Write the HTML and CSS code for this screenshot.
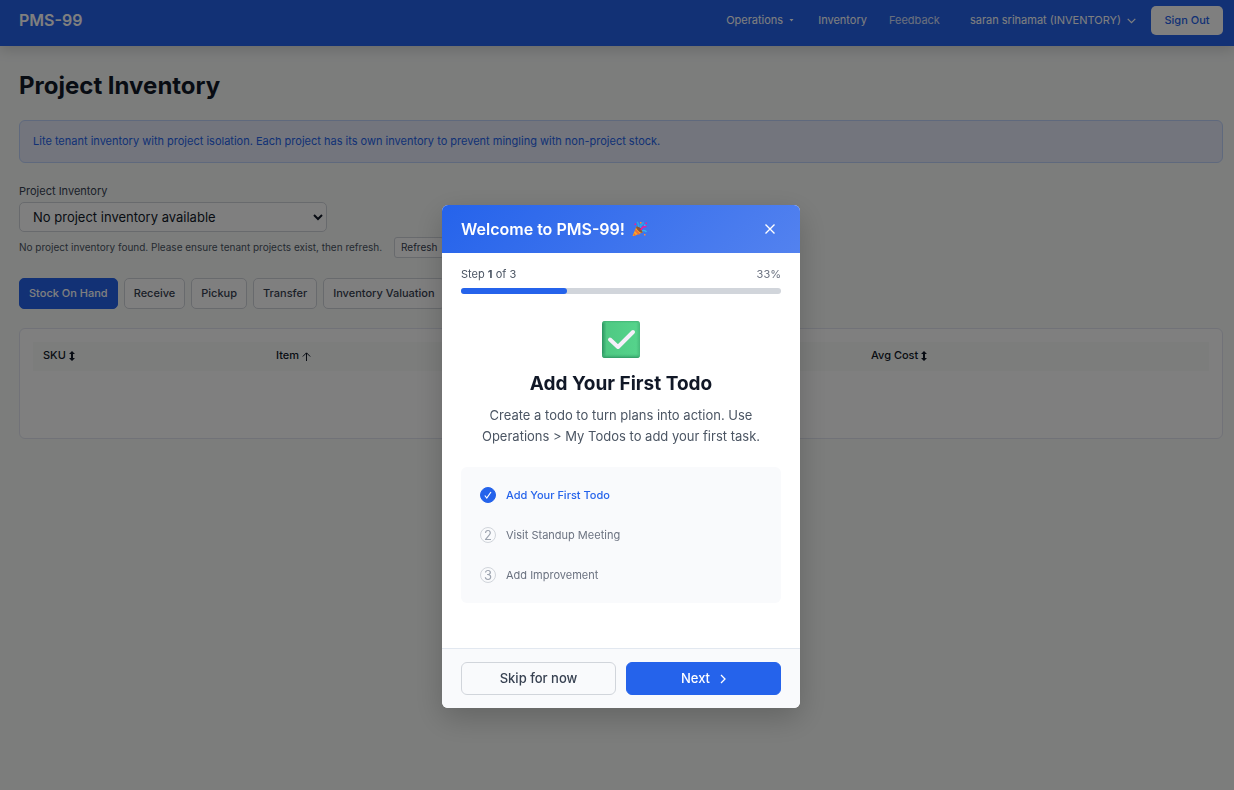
FILE: index.html
```
<!DOCTYPE html>
<html lang="en">

<head>
  <meta charset="UTF-8">
  <meta name="viewport" content="width=device-width, initial-scale=1.0">
  <title>PMS-99 - Project Inventory</title>
  <link rel="stylesheet" href="styles.css">
</head>

<body>
  <header class="navbar">
    <a class="brand" href="#">PMS-99</a>
    <nav class="nav-links">
      <button class="nav-link operations" type="button">Operations
        <svg width="5" height="3" viewBox="0 0 5 3"><path d="M.5 0h4L2.500 2.500z" fill="currentColor"/></svg>
      </button>
      <a class="nav-link" href="#">Inventory</a>
      <a class="nav-link muted" href="#">Feedback</a>
      <button class="nav-link user" type="button">saran srihamat (INVENTORY)
        <svg width="9" height="6" viewBox="0 0 9 6" fill="none" stroke="currentColor" stroke-width="1.200"><path d="M.7 .8l3.800 3.900L8.300 .8"/></svg>
      </button>
      <button class="sign-out" type="button">Sign Out</button>
    </nav>
  </header>

  <main class="page">
    <h1>Project Inventory</h1>
    <div class="notice">Lite tenant inventory with project isolation. Each project has its own inventory to prevent mingling with non-project stock.</div>

    <div class="field">
      <label for="project">Project Inventory</label>
      <select id="project">
        <option>No project inventory available</option>
      </select>
      <div class="hint">
        <span>No project inventory found. Please ensure tenant projects exist, then refresh.</span>
        <button class="btn btn-sm" type="button">Refresh</button>
      </div>
    </div>

    <div class="tabs">
      <button class="btn active" type="button">Stock On Hand</button>
      <button class="btn" type="button">Receive</button>
      <button class="btn" type="button">Pickup</button>
      <button class="btn" type="button">Transfer</button>
      <button class="btn" type="button">Inventory Valuation</button>
    </div>

    <section class="card">
      <table>
        <colgroup>
          <col class="col-sku">
          <col class="col-item">
          <col>
        </colgroup>
        <thead>
          <tr>
            <th>SKU <svg width="6" height="10" viewBox="0 0 6 10"><path d="M3 0l3 3H4v4h2L3 10 0 7h2V3H0z" fill="currentColor"/></svg></th>
            <th>Item <svg width="9" height="9" viewBox="0 0 9 9" fill="none" stroke="currentColor"><path d="M4.500 9V1M.8 4.500L4.500 .8l3.700 3.700"/></svg></th>
            <th>Avg Cost <svg width="6" height="10" viewBox="0 0 6 10"><path d="M3 0l3 3H4v4h2L3 10 0 7h2V3H0z" fill="currentColor"/></svg></th>
          </tr>
        </thead>
      </table>
    </section>
  </main>

  <div class="overlay">
    <div class="modal" role="dialog" aria-modal="true" aria-labelledby="welcome-title">
      <div class="modal-header">
        <h2 id="welcome-title">Welcome to PMS-99!</h2>
        <svg class="party" width="16" height="16" viewBox="0 0 16 16">
          <path d="M4.500 5.500l6 6L1.500 15Q.4 15.400.8 14.200z" fill="#f9a825"/>
          <path d="M3.600 8l4.600 5-2 .8L2.800 10zM2.100 12l2 2.500-1.800.6L1.300 14z" fill="#ef6c3a"/>
          <ellipse cx="7.500" cy="8.500" rx="1.800" ry="4.200" transform="rotate(-45 7.500 8.500)" fill="#8d5438"/>
          <path d="M5 1q2 1.500 1.500 5M8.500 7q-.5-3 2-4 1-1 .3-2" fill="none" stroke="#29a9e8" stroke-width="1.500"/>
          <path d="M9 9q1-4 5.500-3.500" fill="none" stroke="#f5189b" stroke-width="1.500"/>
          <path d="M10 10q2.500-1.500 4.500 1" fill="none" stroke="#35b4f0" stroke-width="1.500"/>
          <path d="M2.500 2.500h1.500V4H2.500zM13.500 1.500H15V3h-1.500z" fill="#f5189b"/>
          <path d="M8 1h1.500v1.500H8zM12 13h1.500v1.500H12z" fill="#ff8a3c"/>
          <path d="M12 3.500h1.500V5H12z" fill="#35b4f0"/>
        </svg>
        <button class="close" type="button" aria-label="Close">
          <svg width="10" height="10" viewBox="0 0 10 10" stroke="currentColor" stroke-width="1.400"><path d="M.5 .5l9 9M9.500 .5l-9 9"/></svg>
        </button>
      </div>

      <div class="modal-body">
        <div class="progress-label">
          <span>Step <b>1</b> of 3</span>
          <span class="percent">33%</span>
        </div>
        <div class="progress"><div class="progress-fill" style="width: 33%"></div></div>

        <svg class="step-icon" width="38" height="38" viewBox="0 0 38 38">
          <defs>
            <linearGradient id="edge" x1="0" x2="1">
              <stop offset="0" stop-color="#2c9462"/>
              <stop offset=".12" stop-color="#4fc983"/>
              <stop offset=".9" stop-color="#55d38b"/>
              <stop offset="1" stop-color="#47b97b"/>
            </linearGradient>
            <linearGradient id="base" x1="0" x2="0" y1="0" y2="1">
              <stop offset="0" stop-color="#3dad70" stop-opacity=".8"/>
              <stop offset=".08" stop-color="#55d38b" stop-opacity="0"/>
              <stop offset=".86" stop-color="#55d38b" stop-opacity="0"/>
              <stop offset="1" stop-color="#2f9863"/>
            </linearGradient>
          </defs>
          <rect width="38" height="37" rx="3" fill="url(#edge)"/>
          <rect width="38" height="37" rx="3" fill="url(#base)"/>
          <path d="M8 18.500l8 7.500L31 11" fill="none" stroke="#f6effa" stroke-width="4" stroke-linecap="round" stroke-linejoin="round"/>
        </svg>
        <h3>Add Your First Todo</h3>
        <p>Create a todo to turn plans into action. Use Operations &gt; My Todos to add your first task.</p>

        <ol class="steps">
          <li class="current">
            <span class="dot"><svg width="8" height="8" viewBox="0 0 8 8" fill="none" stroke="currentColor" stroke-width="1.200"><path d="M.8 4.500l2 2.500L7 1"/></svg></span>
            Add Your First Todo
          </li>
          <li><span class="dot">2</span>Visit Standup Meeting</li>
          <li><span class="dot">3</span>Add Improvement</li>
        </ol>
      </div>

      <div class="modal-footer">
        <button class="skip" type="button">Skip for now</button>
        <button class="next" type="button">Next
          <svg width="6" height="10" viewBox="0 0 6 10" fill="none" stroke="currentColor" stroke-width="1.300"><path d="M1 1l4 4-4 4"/></svg>
        </button>
      </div>
    </div>
  </div>
</body>

</html>
```
FILE: styles.css
```
* {
  box-sizing: border-box;
}

body {
  margin: 0;
  min-height: 100vh;
  background: #f8faf9;
  color: #111827;
  font-family: Inter, "Liberation Sans", sans-serif;
  font-size: 11px;
  line-height: 15px;
}

button,
select {
  font: inherit;
  color: inherit;
}

button {
  cursor: pointer;
}

h1,
h2,
h3,
p {
  margin: 0;
}

/* Top bar */
.navbar {
  display: flex;
  align-items: center;
  justify-content: space-between;
  height: 46px;
  padding: 6px 11px 11px 19px;
  background: #2563eb;
  color: #fff;
  box-shadow: 0 4px 12px rgba(0, 0, 0, 0.15);
}

.brand {
  color: inherit;
  font-size: 16px;
  font-weight: 600;
  text-decoration: none;
}

.nav-links {
  display: flex;
  align-items: center;
}

.nav-link {
  display: flex;
  align-items: center;
  gap: 6px;
  margin-right: 22px;
  padding: 0;
  border: 0;
  background: none;
  color: #fff;
  text-decoration: none;
}

.nav-link.operations {
  margin-right: 24px;
}

.nav-link.muted {
  margin-right: 30px;
  opacity: 0.8;
}

.nav-link.user {
  margin-right: 15px;
}

.sign-out {
  width: 72px;
  height: 29px;
  padding: 0;
  border: 0;
  border-radius: 5px;
  background: #fff;
  color: #2563eb;
  font-weight: 500;
}

/* Page */
.page {
  padding: 24px 11px 24px 19px;
}

h1 {
  font-size: 24px;
  font-weight: 700;
  line-height: 32px;
}

.notice {
  margin-top: 18px;
  padding: 13px;
  border: 1px solid #bfd3fb;
  border-radius: 6px;
  background: #e6ebfb;
  color: #2563eb;
}

.field {
  margin-top: 21px;
}

.field label {
  display: block;
  margin-bottom: 3px;
  color: #374151;
}

.field select {
  display: block;
  width: 308px;
  height: 30px;
  padding: 0 9px;
  border: 1px solid #d1d5db;
  border-radius: 5px;
  background: #fff;
  font-size: 13px;
}

.hint {
  display: flex;
  align-items: center;
  gap: 12px;
  margin-top: 5px;
  color: #4b5563;
  font-size: 10px;
}

.btn {
  height: 31px;
  padding: 0 9px;
  border: 1px solid #d1d5db;
  border-radius: 5px;
  background: #fff;
  color: #374151;
  font-weight: 500;
}

.btn-sm {
  height: 21px;
  padding: 0 6px;
  border-radius: 3px;
  font-weight: 400;
}

.btn.active {
  border-color: #2563eb;
  background: #2563eb;
  color: #fff;
}

.tabs {
  display: flex;
  gap: 6px;
  margin-top: 20px;
}

.card {
  min-height: 111px;
  margin-top: 19px;
  padding: 13px;
  border: 1px solid #e2e5f0;
  border-radius: 6px;
  background: #fff;
}

table {
  width: 100%;
  border-collapse: collapse;
  table-layout: fixed;
}

.col-sku {
  width: 233px;
}

.col-item {
  width: 595px;
}

th {
  height: 29px;
  padding: 0 10px 2px;
  background: #f8faf9;
  font-weight: 500;
  text-align: left;
}

th svg {
  vertical-align: -2px;
}

/* Welcome dialog */
.overlay {
  position: fixed;
  inset: 0;
  display: flex;
  align-items: flex-start;
  justify-content: center;
  padding: 205px 0 0 8px;
  background: rgba(0, 0, 0, 0.5);
}

.modal {
  width: 358px;
  border-radius: 6px;
  background: #fff;
  box-shadow: 0 10px 30px rgba(0, 0, 0, 0.2);
  overflow: hidden;
}

.modal-header {
  display: flex;
  align-items: center;
  gap: 7px;
  height: 48px;
  padding: 0 19px;
  background: linear-gradient(135deg, #2563eb, #5382ef);
  color: #fff;
}

.modal-header h2 {
  font-size: 16px;
  font-weight: 600;
}

.close {
  display: flex;
  margin-left: auto;
  padding: 6px;
  border: 0;
  background: none;
}

.modal-body {
  padding: 14px 19px 45px;
  text-align: center;
}

.progress-label {
  display: flex;
  justify-content: space-between;
  color: #4b5563;
}

.percent {
  color: #6b7280;
}

.progress {
  height: 6px;
  margin-top: 6px;
  border-radius: 3px;
  background: #d1d5db;
}

.progress-fill {
  height: 100%;
  border-radius: 3px;
  background: #2563eb;
}

.step-icon {
  display: block;
  margin: 27px auto 13px;
}

h3 {
  font-size: 19px;
  font-weight: 700;
  line-height: 24px;
}

.modal-body p {
  margin-top: 9px;
  color: #4b5563;
  font-size: 13px;
  line-height: 21px;
}

.steps {
  margin: 20px 0 0;
  padding: 8px 19px;
  border-radius: 6px;
  background: #f9fafc;
  list-style: none;
}

.steps li {
  display: flex;
  align-items: center;
  gap: 10px;
  height: 40px;
  color: #6b7280;
}

.steps .current {
  color: #2563eb;
  font-weight: 500;
}

.dot {
  display: flex;
  align-items: center;
  justify-content: center;
  width: 16px;
  height: 16px;
  border: 1px solid #d1d5db;
  border-radius: 50%;
  color: #9ca3af;
  font-size: 13px;
}

.current .dot {
  border-color: #2563eb;
  background: #2563eb;
  color: #fff;
}

.modal-footer {
  display: flex;
  gap: 10px;
  padding: 13px 19px;
  border-top: 1px solid #e2e8f0;
  background: #f9fafc;
}

.modal-footer button {
  display: flex;
  flex: 1;
  align-items: center;
  justify-content: center;
  gap: 10px;
  height: 33px;
  border: 1px solid #d1d5db;
  border-radius: 6px;
  font-size: 13px;
  font-weight: 500;
}

.skip {
  background: #f9fafc;
  color: #374151;
}

.modal-footer .next {
  border-color: #2563eb;
  background: #2563eb;
  color: #fff;
}
```
